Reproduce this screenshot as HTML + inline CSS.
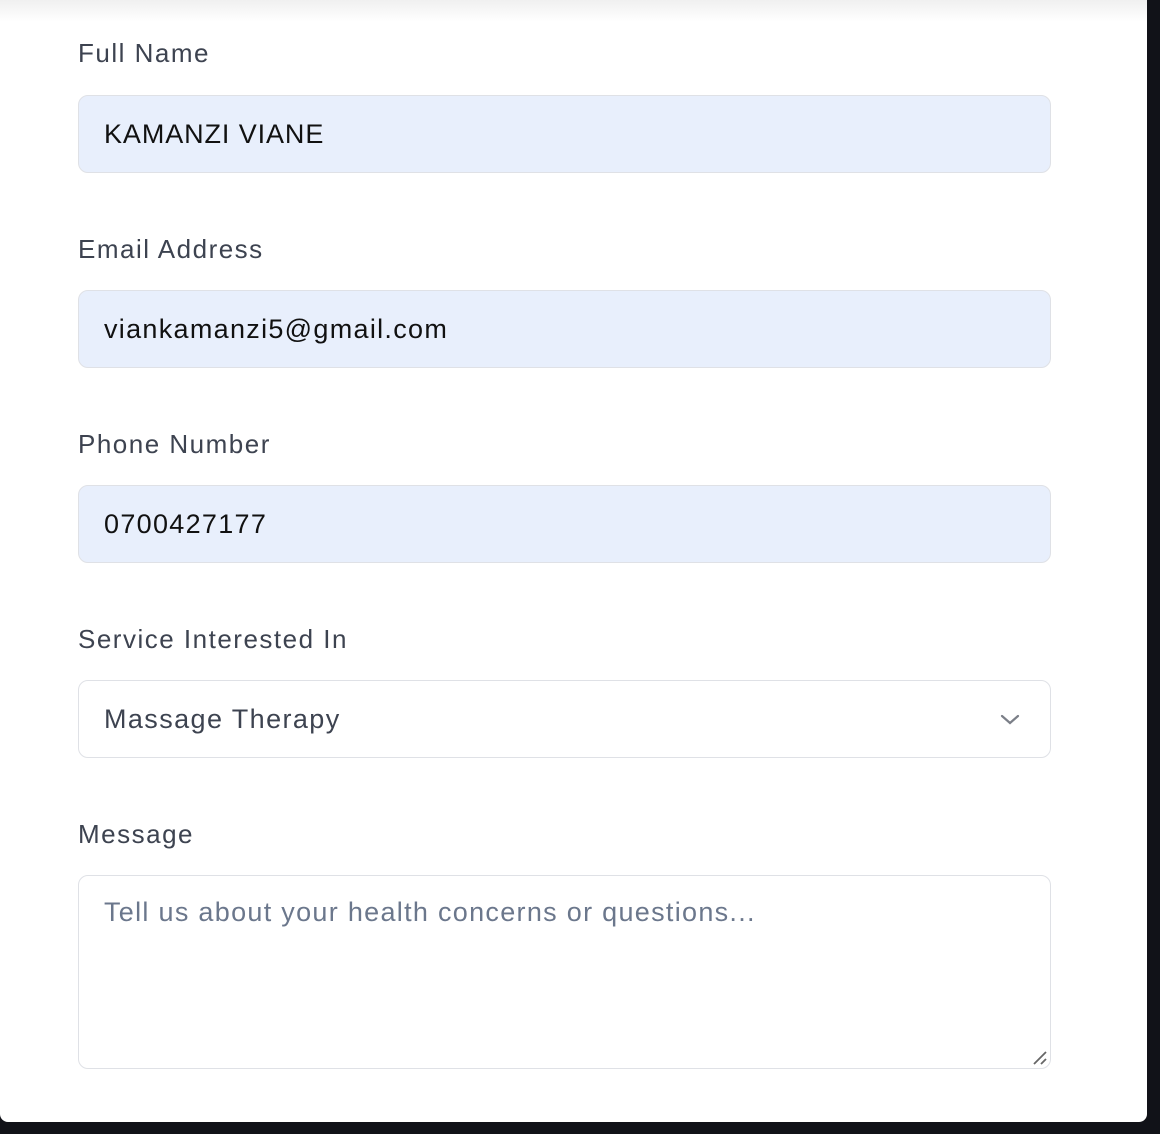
<!DOCTYPE html>
<html><head><style>
html,body{margin:0;padding:0;}
body{width:1160px;height:1134px;background:#111218;position:relative;overflow:hidden;font-family:"Liberation Sans",sans-serif;}
.card{position:absolute;left:0;top:-20px;width:1147px;height:1142px;background:#fff;border-radius:0 0 8px 8px;}
.topshade{position:absolute;left:0;top:0;width:1147px;height:22px;background:linear-gradient(#f0f0f0,#fff);}
.lbl{position:absolute;left:78px;font-size:26px;color:#3d4350;line-height:30px;letter-spacing:1.5px;}
.inp{position:absolute;left:78px;width:971px;height:76px;border:1px solid #dfe1e6;border-radius:10px;box-sizing:content-box;}
.fill{background:#e8effc;}
.txt{position:absolute;left:25px;top:22px;font-size:27px;color:#111;line-height:32px;letter-spacing:1.3px;}
</style></head><body>
<div class="card"></div>
<div class="topshade"></div>
<div class="lbl" style="top:38px">Full Name</div>
<div class="inp fill" style="top:95px"><div class="txt" style="letter-spacing:0.9px">KAMANZI VIANE</div></div>
<div class="lbl" style="top:234px">Email Address</div>
<div class="inp fill" style="top:290px"><div class="txt">viankamanzi5@gmail.com</div></div>
<div class="lbl" style="top:429px">Phone Number</div>
<div class="inp fill" style="top:485px"><div class="txt">0700427177</div></div>
<div class="lbl" style="top:624px">Service Interested In</div>
<div class="inp" style="top:680px"><div class="txt" style="color:#3d4350;letter-spacing:1.4px">Massage Therapy</div>
<svg style="position:absolute;left:920px;top:32px" width="22" height="14" viewBox="0 0 22 14"><path d="M3 3 L11 10 L19 3" fill="none" stroke="#7b7f88" stroke-width="2.2" stroke-linecap="round"/></svg></div>
<div class="lbl" style="top:819px">Message</div>
<div class="inp" style="top:875px;height:192px"><div class="txt" style="top:20px;color:#6b778c">Tell us about your health concerns or questions...</div>
<svg style="position:absolute;right:2px;bottom:2px" width="16" height="16" viewBox="0 0 16 16"><path d="M2 14 L14 2 M9 14 L14 9" stroke="#666" stroke-width="1.8"/></svg></div>
</body></html>
